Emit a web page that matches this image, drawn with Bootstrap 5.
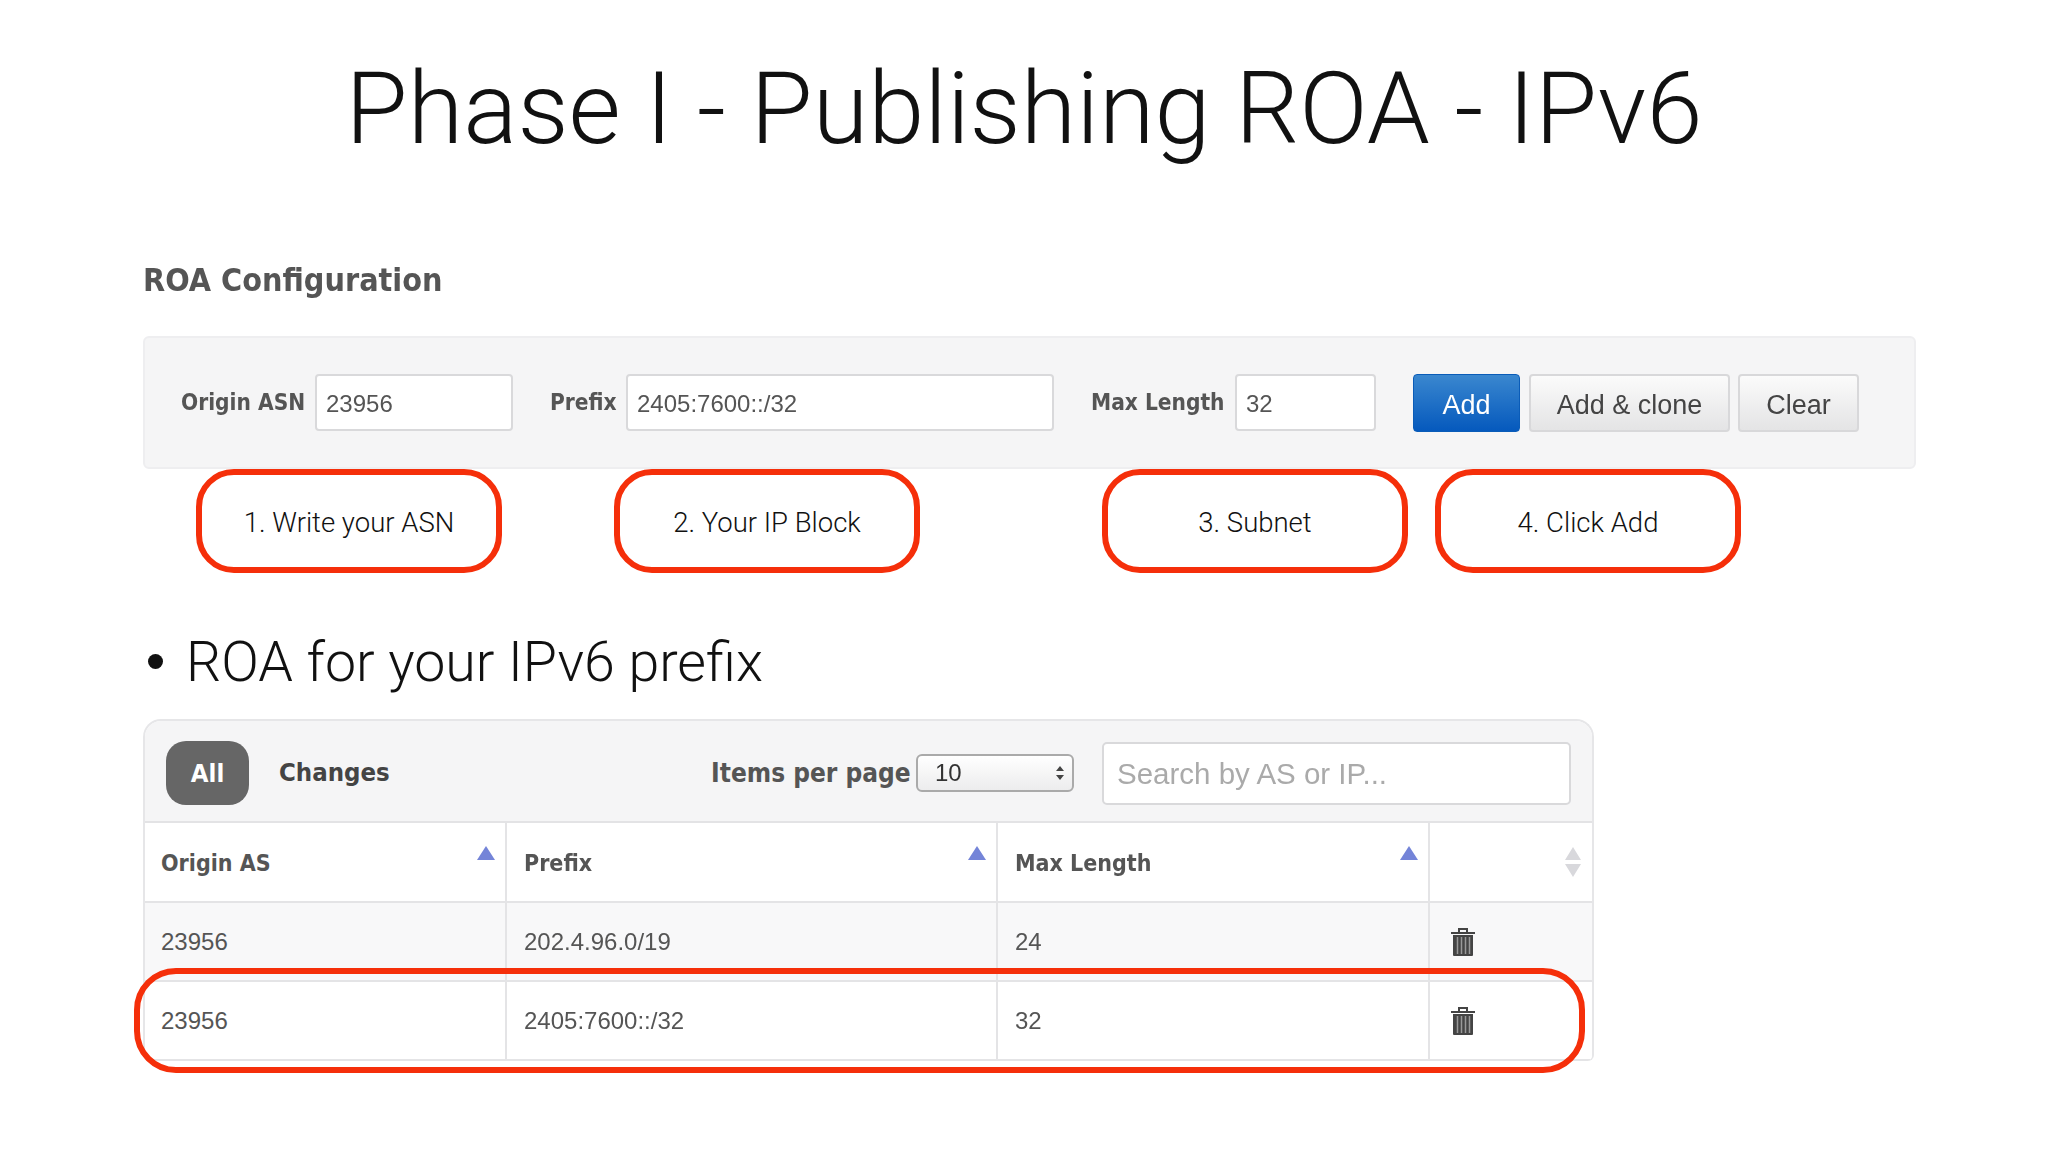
<!DOCTYPE html>
<html lang="en"><head><meta charset="utf-8"><title>Phase I - Publishing ROA - IPv6</title>
<link href="https://cdn.jsdelivr.net/npm/bootstrap@5.3.0/dist/css/bootstrap.min.css" rel="stylesheet">
<style>
html,body{margin:0;background:#fff;}
body{width:2048px;height:1152px;overflow:hidden;font-family:"Liberation Sans",Arial,sans-serif;color:#000;}
.slide{padding:0 0 0 143px;width:2048px;}
.slide-title{height:220px;margin:0 0 0 -143px;width:2048px;text-align:center;font:300 101px/218px Roboto,sans-serif;color:#111;}
.sec-head{height:116px;margin:0;padding-top:36px;font:700 32px/48px "DejaVu Sans Condensed","DejaVu Sans",sans-serif;font-stretch:condensed;color:#555;filter:blur(.4px);}
.conf-panel{width:1773px;height:133px;background:#f5f5f6;border:2px solid #eeeef0;border-radius:6px;padding-left:36px;filter:blur(.4px);}
.lab{font:700 22.500px/1 "DejaVu Sans Condensed","DejaVu Sans",sans-serif;font-stretch:condensed;color:#555;margin:0;white-space:nowrap;}
.l1{width:124px;}.l2{width:68px;margin-left:37px;}.l3{width:134px;margin-left:37px;}
.fld{height:57px;border:2px solid #d9d9db;border-radius:4px;background:#fff;color:#555;font:24px "Liberation Sans",sans-serif;padding:3px 9px 0;box-shadow:none;}
.f1{width:198px;margin-left:10px;}.f2{width:428px;margin-left:8px;}.f3{width:141px;margin-left:10px;}
.sbtn{height:58px;font:27px/1 "Liberation Sans",sans-serif;border-radius:4px;padding:5px 0 0;}
.sbtn-add{width:107px;margin-left:37px;color:#fff;background:linear-gradient(#3a87cf,#0559bd);border:1px solid #0a5cb8;}
.sbtn-plain{color:#444;background:linear-gradient(#fbfbfb,#e4e4e5);border:2px solid #d8d8da;}
.b2{width:201px;margin-left:9px;}.b3{width:121px;margin-left:8px;}
.callouts{height:104px;}
.bubble{width:306px;height:104px;border:6px solid #f52f0a;border-radius:38px;font:300 27.500px/1 Roboto,sans-serif;color:#111;padding-top:3px;}
.c1{margin-left:53px;}.c2{margin-left:112px;}.c3{margin-left:182px;}.c4{margin-left:27px;}
.bullet-line{height:146px;margin:0;font:300 55.500px/1 Roboto,sans-serif;color:#111;padding:62px 0 0 5px;display:flex;gap:23px;}
.bullet-dot{width:15px;height:15px;background:#111;border-radius:50%;margin-top:19px;}
.wrapbox{width:1451px;position:relative;}
.list-panel{border:2px solid #e6e6e8;border-bottom-width:0;border-radius:18px 18px 6px 6px;overflow:hidden;filter:blur(.4px);}
.toolbar{height:102px;background:#f5f5f6;padding:3px 0 0 21px;border-bottom:2px solid #e3e3e5;}
.pill{width:83px;height:64px;border-radius:20px;background:#666;color:#fff;font:700 25.500px/64px "DejaVu Sans Condensed","DejaVu Sans",sans-serif;font-stretch:condensed;text-align:center;flex:none;}
.chg{font:700 25.500px/1 "DejaVu Sans Condensed","DejaVu Sans",sans-serif;font-stretch:condensed;color:#444;margin-left:30px;width:111px;flex:none;white-space:nowrap;}
.ipp{font:700 26px/1 "DejaVu Sans Condensed","DejaVu Sans",sans-serif;font-stretch:condensed;color:#555;margin-left:321px;width:197px;flex:none;white-space:nowrap;}
.pagesel{width:158px;height:38px;margin:1px 0 0 8px;border:2px solid #aaa;border-radius:6px;font:24px/1 "Liberation Sans",sans-serif;color:#333;padding:0 0 0 17px;background:linear-gradient(#fff,#ececed);appearance:none;display:block;}
.sel-wrap{position:relative;flex:none;}
.sel-arrows{position:absolute;right:9px;top:13px;width:10px;height:14px;}
.srch{width:469px;height:63px;margin:1px 0 0 28px;border:2px solid #d9d9db;border-radius:5px;background:#fff;font:29.500px "Liberation Sans",sans-serif;padding:2px 13px 0;color:#aaa;flex:none;}
.srch::placeholder{color:#aaa;opacity:1;}
.grid-tbl{table-layout:fixed;width:100%;margin:0;border-collapse:collapse;font:24px "Liberation Sans",sans-serif;color:#555;}
.grid-tbl th,.grid-tbl td{height:79px;padding:0 0 0 17px;vertical-align:middle;border:2px solid #e4e4e6;border-top:0;position:relative;background:#fff;box-shadow:none;color:#555;}
.grid-tbl th:first-child,.grid-tbl td:first-child{border-left:0;padding-left:16px;}
.grid-tbl th:last-child,.grid-tbl td:last-child{border-right:0;}
.grid-tbl th{font:700 23px/1 "DejaVu Sans Condensed","DejaVu Sans",sans-serif;font-stretch:condensed;padding-top:3px;}
.grid-tbl tr.alt td{background:#f8f8f9;}
.tri{position:absolute;top:23px;right:10px;width:0;height:0;border-left:9px solid transparent;border-right:9px solid transparent;border-bottom:14px solid #7484d8;}
.updown{position:absolute;top:24px;right:10px;width:18px;height:30px;}
.trash{width:24px;height:28px;display:block;margin-left:4px;}
.hl-ring{position:absolute;left:-9px;top:249px;width:1451px;height:105px;border:6px solid #f52f0a;border-radius:42px;pointer-events:none;}
</style></head>
<body>
<main class="slide">
  <h1 class="slide-title">Phase I - Publishing ROA - IPv6</h1>
  <h2 class="sec-head">ROA Configuration</h2>
  <form class="conf-panel d-flex align-items-center">
    <label class="lab l1">Origin ASN</label><input class="fld f1" value="23956">
    <label class="lab l2">Prefix</label><input class="fld f2" value="2405:7600::/32">
    <label class="lab l3">Max Length</label><input class="fld f3" value="32">
    <button type="button" class="btn sbtn sbtn-add">Add</button>
    <button type="button" class="btn sbtn sbtn-plain b2">Add &amp; clone</button>
    <button type="button" class="btn sbtn sbtn-plain b3">Clear</button>
  </form>
  <div class="callouts d-flex">
    <div class="bubble c1 d-flex align-items-center justify-content-center">1. Write your ASN</div>
    <div class="bubble c2 d-flex align-items-center justify-content-center">2. Your IP Block</div>
    <div class="bubble c3 d-flex align-items-center justify-content-center">3. Subnet</div>
    <div class="bubble c4 d-flex align-items-center justify-content-center">4. Click Add</div>
  </div>
  <p class="bullet-line"><span class="bullet-dot"></span><span>ROA for your IPv6 prefix</span></p>
  <div class="wrapbox">
    <div class="list-panel">
      <div class="toolbar d-flex align-items-center">
        <div class="pill">All</div>
        <div class="chg">Changes</div>
        <div class="ipp">Items per page</div>
        <div class="sel-wrap">
          <select class="pagesel"><option>10</option></select>
          <svg class="sel-arrows" viewBox="0 0 10 14"><path d="M5 0 9 5H1zM5 14 1 9h8z" fill="#444"/></svg>
        </div>
        <input class="srch" placeholder="Search by AS or IP...">
      </div>
      <table class="table grid-tbl">
        <colgroup><col style="width:361px"><col style="width:491px"><col style="width:432px"><col></colgroup>
        <thead><tr>
          <th>Origin AS<span class="tri"></span></th>
          <th>Prefix<span class="tri"></span></th>
          <th>Max Length<span class="tri"></span></th>
          <th><svg class="updown" viewBox="0 0 18 30"><path d="M9 0 17 13H1zM9 30 1 17h16z" fill="#d8d8dc"/></svg></th>
        </tr></thead>
        <tbody>
          <tr class="alt"><td>23956</td><td>202.4.96.0/19</td><td>24</td><td>
            <svg class="trash" viewBox="0 0 24 28"><path d="M8 4V1h8v3M0 5h24" fill="none" stroke="#444" stroke-width="2"/><path d="M2 7h20v20a1 1 0 0 1-1 1H3a1 1 0 0 1-1-1z" fill="#444"/><path d="M6.500 9v17M10.500 9v17M14.500 9v17M18.500 9v17" stroke="#999" stroke-width="1.500"/></svg></td></tr>
          <tr><td>23956</td><td>2405:7600::/32</td><td>32</td><td>
            <svg class="trash" viewBox="0 0 24 28"><path d="M8 4V1h8v3M0 5h24" fill="none" stroke="#444" stroke-width="2"/><path d="M2 7h20v20a1 1 0 0 1-1 1H3a1 1 0 0 1-1-1z" fill="#444"/><path d="M6.500 9v17M10.500 9v17M14.500 9v17M18.500 9v17" stroke="#999" stroke-width="1.500"/></svg></td></tr>
        </tbody>
      </table>
    </div>
    <div class="hl-ring"></div>
  </div>
</main>
<script src="https://cdn.jsdelivr.net/npm/bootstrap@5.3.0/dist/js/bootstrap.bundle.min.js"></script>
</body></html>
